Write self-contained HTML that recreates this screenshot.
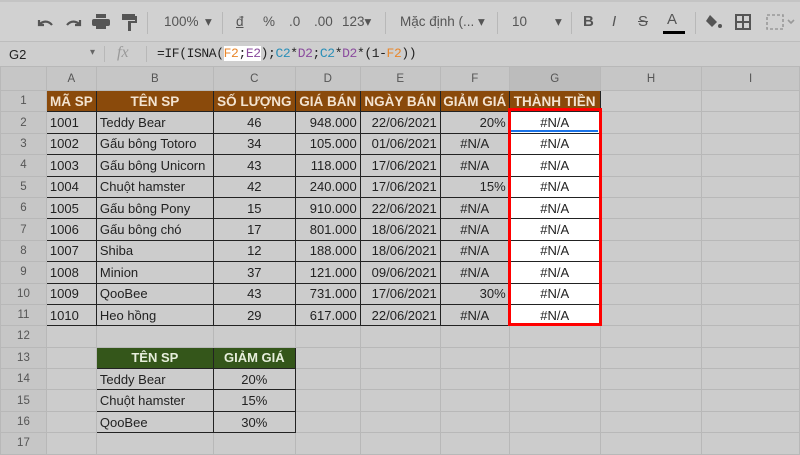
<!DOCTYPE html>
<html><head><meta charset="utf-8"><style>
*{box-sizing:border-box;margin:0;padding:0}
body{width:800px;height:450px;overflow:hidden;background:#cccccc;font-family:"Liberation Sans",Arial,sans-serif;position:relative}
#tb{position:absolute;left:0;top:0;width:800px;height:42px;background:#d1d1d1;border-top:2px solid #c4c4c4;border-bottom:1px solid #bdbdbd;color:#555;font-size:13.5px}
#tb span{position:absolute;top:12px}
#fb{position:absolute;left:0;top:42px;width:800px;height:25px;background:#cecece;border-bottom:1px solid #b5b5b5;font-size:13px;color:#222}
.sep{position:absolute;width:1px;background:#b8b8b8}
table{position:absolute;left:0;top:66px;border-collapse:collapse;table-layout:fixed;font-size:13px;color:#222}
td{border:1px solid #b8b8b8;height:21.4px;padding:0 3px;white-space:nowrap;overflow:hidden;background:#cccccc}
tr.ch td{height:24px;background:#c6c6c6;color:#555;text-align:center;font-size:11.5px}
td.rh{background:#c6c6c6;color:#555;text-align:center;font-size:11.5px}
td.b{border:1px solid #222}
tr.h td.b{background:#8a4a0b;color:#f3e3d0;font-weight:bold;text-align:center;font-size:13.5px;padding:0}
td.g{border:1px solid #222;background:#34561a;color:#e6eedb;font-weight:bold;text-align:center}
.c{text-align:center}.r{text-align:right}
td.w{background:#fff;text-align:center}
#red{position:absolute;left:508px;top:108px;width:94px;height:218px;border:3px solid #f00}
</style></head><body>
<div id="tb">
<svg style="position:absolute;left:36px;top:13px" width="70" height="16" viewBox="0 0 70 16" fill="none" stroke="#555" stroke-width="2.2"><path d="M3 5v5h5M3 10c3-4 9-5 13 0"/><path d="M44 5v5h-5M44 10c-3-4-9-5-13 0"/></svg>
<svg style="position:absolute;left:92px;top:12px" width="18" height="16" viewBox="0 0 18 16" fill="#555"><rect x="4" y="0" width="10" height="4"/><rect x="0" y="5" width="18" height="7" rx="2"/><rect x="4" y="10" width="10" height="5"/></svg>
<svg style="position:absolute;left:122px;top:12px" width="16" height="18" viewBox="0 0 16 18" fill="#555"><rect x="0" y="0" width="13" height="6"/><rect x="13" y="2" width="2" height="6"/><rect x="6" y="7" width="9" height="2"/><rect x="6" y="8" width="3" height="9"/></svg>
<div class="sep" style="left:147px;top:10px;height:22px"></div>
<span style="left:164px">100%</span><span style="left:205px">▾</span>
<div class="sep" style="left:222px;top:10px;height:22px"></div>
<span style="left:236px;text-decoration:underline">đ</span><span style="left:263px">%</span><span style="left:289px">.0</span><span style="left:314px">.00</span><span style="left:342px">123▾</span>
<div class="sep" style="left:385px;top:10px;height:22px"></div>
<span style="left:400px">Mặc định (...</span><span style="left:478px">▾</span>
<div class="sep" style="left:497px;top:10px;height:22px"></div>
<span style="left:512px">10</span><span style="left:555px">▾</span>
<div class="sep" style="left:571px;top:10px;height:22px"></div>
<span style="left:583px;font-weight:bold;font-size:15px;top:11px">B</span><span style="left:612px;font-style:italic;font-size:15px;top:11px">I</span><span style="left:638px;text-decoration:line-through;font-size:15px;top:11px">S</span><span style="left:667px;font-size:15px;top:9px">A</span>
<div style="position:absolute;left:663px;top:29px;width:22px;height:3px;background:#000"></div>
<div class="sep" style="left:695px;top:10px;height:22px"></div>
<svg style="position:absolute;left:705px;top:12px" width="18" height="16" viewBox="0 0 18 16" fill="#555"><path d="M5 1l7 7-5 5-6-6z"/><circle cx="15" cy="12" r="2"/></svg>
<svg style="position:absolute;left:735px;top:12px" width="16" height="16" viewBox="0 0 16 16" fill="none" stroke="#555" stroke-width="2"><rect x="1" y="1" width="14" height="14"/><path d="M8 1v14M1 8h14"/></svg>
<svg style="position:absolute;left:766px;top:12px" width="30" height="16" viewBox="0 0 30 16" fill="none" stroke="#999" stroke-width="1.6"><rect x="1" y="1" width="16" height="14" stroke-dasharray="3 2"/><path d="M22 6l3 3 3-3"/></svg>
</div>
<div id="fb">
<span style="position:absolute;left:9px;top:5px">G2</span><span style="position:absolute;left:90px;top:5px;color:#666;font-size:10px">▾</span>
<div class="sep" style="left:104px;top:4px;height:16px"></div>
<span style="position:absolute;left:117px;top:2px;color:#999;font-style:italic;font-family:'Liberation Serif',serif;font-size:16px">fx</span>
<div class="sep" style="left:146px;top:4px;height:16px"></div>
<span style="position:absolute;left:157px;top:4px;font-family:'Liberation Mono',monospace;font-size:13px;letter-spacing:-0.4px">=IF(ISNA(<span style="background:#fff"><span style="color:#e8862b">F2</span>;<span style="color:#8b4c9e">E2</span></span>);<span style="color:#2a8fb8">C2</span>*<span style="color:#8b4c9e">D2</span>;<span style="color:#2a8fb8">C2</span>*<span style="color:#8b4c9e">D2</span>*(1-<span style="color:#e8862b">F2</span>))</span>
</div>
<table>
<colgroup><col style="width:46px"><col style="width:50px"><col style="width:117px"><col style="width:82px"><col style="width:65px"><col style="width:80px"><col style="width:69px"><col style="width:91px"><col style="width:102px"><col style="width:98px"></colgroup>
<tr class="ch"><td></td><td>A</td><td>B</td><td>C</td><td>D</td><td>E</td><td>F</td><td style="background:#bcbcbc">G</td><td>H</td><td>I</td></tr>
<tr class="h"><td class="rh">1</td><td class="b">MÃ SP</td><td class="b">TÊN SP</td><td class="b">SỐ LƯỢNG</td><td class="b">GIÁ BÁN</td><td class="b">NGÀY BÁN</td><td class="b">GIẢM GIÁ</td><td class="b">THÀNH TIỀN</td><td></td><td></td></tr>
<tr><td class="rh">2</td><td class="b">1001</td><td class="b">Teddy Bear</td><td class="b c">46</td><td class="b r">948.000</td><td class="b r">22/06/2021</td><td class="b r">20%</td><td class="b w">#N/A</td><td></td><td></td></tr>
<tr><td class="rh">3</td><td class="b">1002</td><td class="b">Gấu bông Totoro</td><td class="b c">34</td><td class="b r">105.000</td><td class="b r">01/06/2021</td><td class="b c">#N/A</td><td class="b w">#N/A</td><td></td><td></td></tr>
<tr><td class="rh">4</td><td class="b">1003</td><td class="b">Gấu bông Unicorn</td><td class="b c">43</td><td class="b r">118.000</td><td class="b r">17/06/2021</td><td class="b c">#N/A</td><td class="b w">#N/A</td><td></td><td></td></tr>
<tr><td class="rh">5</td><td class="b">1004</td><td class="b">Chuột hamster</td><td class="b c">42</td><td class="b r">240.000</td><td class="b r">17/06/2021</td><td class="b r">15%</td><td class="b w">#N/A</td><td></td><td></td></tr>
<tr><td class="rh">6</td><td class="b">1005</td><td class="b">Gấu bông Pony</td><td class="b c">15</td><td class="b r">910.000</td><td class="b r">22/06/2021</td><td class="b c">#N/A</td><td class="b w">#N/A</td><td></td><td></td></tr>
<tr><td class="rh">7</td><td class="b">1006</td><td class="b">Gấu bông chó</td><td class="b c">17</td><td class="b r">801.000</td><td class="b r">18/06/2021</td><td class="b c">#N/A</td><td class="b w">#N/A</td><td></td><td></td></tr>
<tr><td class="rh">8</td><td class="b">1007</td><td class="b">Shiba</td><td class="b c">12</td><td class="b r">188.000</td><td class="b r">18/06/2021</td><td class="b c">#N/A</td><td class="b w">#N/A</td><td></td><td></td></tr>
<tr><td class="rh">9</td><td class="b">1008</td><td class="b">Minion</td><td class="b c">37</td><td class="b r">121.000</td><td class="b r">09/06/2021</td><td class="b c">#N/A</td><td class="b w">#N/A</td><td></td><td></td></tr>
<tr><td class="rh">10</td><td class="b">1009</td><td class="b">QooBee</td><td class="b c">43</td><td class="b r">731.000</td><td class="b r">17/06/2021</td><td class="b r">30%</td><td class="b w">#N/A</td><td></td><td></td></tr>
<tr><td class="rh">11</td><td class="b">1010</td><td class="b">Heo hồng</td><td class="b c">29</td><td class="b r">617.000</td><td class="b r">22/06/2021</td><td class="b c">#N/A</td><td class="b w">#N/A</td><td></td><td></td></tr>
<tr><td class="rh">12</td><td></td><td></td><td></td><td></td><td></td><td></td><td></td><td></td><td></td></tr>
<tr><td class="rh">13</td><td></td><td class="g">TÊN SP</td><td class="g">GIẢM GIÁ</td><td></td><td></td><td></td><td></td><td></td><td></td></tr>
<tr><td class="rh">14</td><td></td><td class="b">Teddy Bear</td><td class="b c">20%</td><td></td><td></td><td></td><td></td><td></td><td></td></tr>
<tr><td class="rh">15</td><td></td><td class="b">Chuột hamster</td><td class="b c">15%</td><td></td><td></td><td></td><td></td><td></td><td></td></tr>
<tr><td class="rh">16</td><td></td><td class="b">QooBee</td><td class="b c">30%</td><td></td><td></td><td></td><td></td><td></td><td></td></tr>
<tr><td class="rh">17</td><td></td><td></td><td></td><td></td><td></td><td></td><td></td><td></td><td></td></tr>
</table>
<div style="position:absolute;left:510px;top:130px;width:88px;height:2px;background:#1a73e8"></div>
<div id="red"></div>
</body></html>
